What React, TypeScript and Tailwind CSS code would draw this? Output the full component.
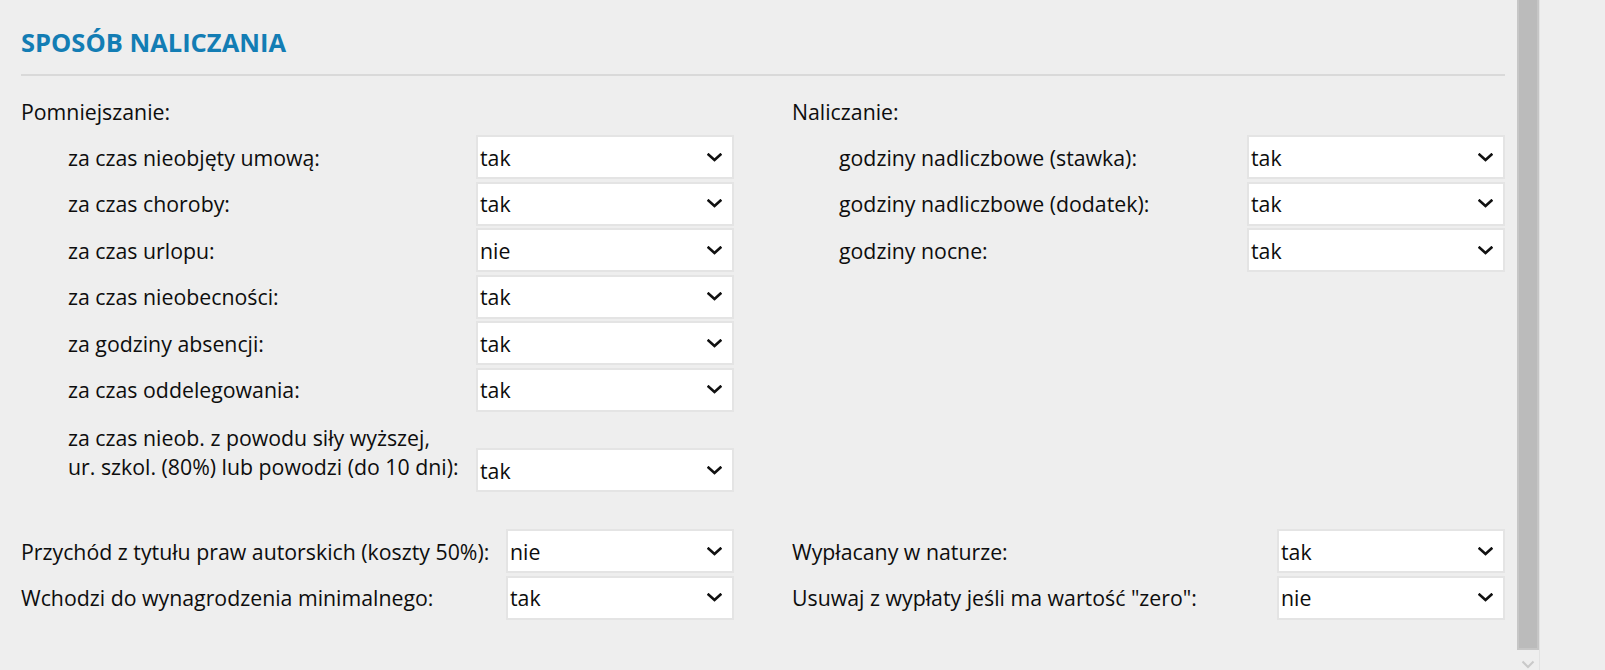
import clsx from 'clsx'

type SelectProps = {
  value: string
  className?: string
}

function Chevron() {
  return (
    <svg width="15" height="9" viewBox="0 0 15 9" fill="none" className="shrink-0">
      <polyline
        points="1.6,1.6 7.5,7 13.4,1.6"
        stroke="#111"
        strokeWidth="2.6"
        strokeLinecap="square"
        strokeLinejoin="miter"
      />
    </svg>
  )
}

function Select({ value, className }: SelectProps) {
  return (
    <div
      className={clsx(
        'flex h-[44px] shrink-0 items-center justify-between border-2 border-[#e4e4e4] bg-white pl-[2px] pr-[10px] leading-[29px]',
        className,
      )}
    >
      <span>{value}</span>
      <Chevron />
    </div>
  )
}

type RowProps = {
  label: string
  value: string
  indent?: boolean
  wide?: boolean
}

function Row({ label, value, indent, wide }: RowProps) {
  return (
    <div className="flex h-[44px] items-center">
      <div className={clsx('flex-1 whitespace-nowrap leading-[29px]', indent && 'pl-[47px]')}>
        {label}
      </div>
      <Select value={value} className={wide ? 'w-[258px]' : 'w-[228px]'} />
    </div>
  )
}

const pomniejszanie = [
  { label: 'za czas nieobjęty umową:', value: 'tak' },
  { label: 'za czas choroby:', value: 'tak' },
  { label: 'za czas urlopu:', value: 'nie' },
  { label: 'za czas nieobecności:', value: 'tak' },
  { label: 'za godziny absencji:', value: 'tak' },
  { label: 'za czas oddelegowania:', value: 'tak' },
]

const naliczanie = [
  { label: 'godziny nadliczbowe (stawka):', value: 'tak' },
  { label: 'godziny nadliczbowe (dodatek):', value: 'tak' },
  { label: 'godziny nocne:', value: 'tak' },
]

export default function App() {
  return (
    <div className="flex h-[670px] w-full overflow-hidden bg-[#eeeeee] font-['Open_Sans','Noto_Sans',sans-serif] text-[21.3px] text-[#0d0d0d]">
      <div className="w-[1517px] shrink-0 pl-[21px] pr-[12px]">
        <h2 className="mt-[24px] h-[36px] text-[25.5px] leading-[36px] font-bold text-[#137db4]">
          SPOSÓB NALICZANIA
        </h2>
        <div className="mt-[14px] h-[2px] bg-[#d9d9d9]" />

        <div className="grid grid-cols-[713px_713px] gap-x-[58px]">
          <div>
            <div className="mt-[21px] h-[29px] leading-[29px]">Pomniejszanie:</div>
            <div className="mt-[9px] flex flex-col gap-[2.5px]">
              {pomniejszanie.map(r => (
                <Row key={r.label} label={r.label} value={r.value} indent wide />
              ))}
              <div className="mt-[8.5px] flex items-start">
                <div className="flex-1 pl-[47px] leading-[29px] whitespace-nowrap">
                  za czas nieob. z powodu siły wyższej,
                  <br />
                  ur. szkol. (80%) lub powodzi (do 10 dni):
                </div>
                <Select value="tak" className="mt-[25.5px] w-[258px]" />
              </div>
            </div>
          </div>

          <div>
            <div className="mt-[21px] h-[29px] leading-[29px]">Naliczanie:</div>
            <div className="mt-[9px] flex flex-col gap-[2.5px]">
              {naliczanie.map(r => (
                <Row key={r.label} label={r.label} value={r.value} indent wide />
              ))}
            </div>
          </div>
        </div>

        <div className="mt-[37px] grid grid-cols-[713px_713px] gap-x-[58px]">
          <div className="flex flex-col gap-[2.5px]">
            <Row label="Przychód z tytułu praw autorskich (koszty 50%):" value="nie" />
            <Row label="Wchodzi do wynagrodzenia minimalnego:" value="tak" />
          </div>
          <div className="flex flex-col gap-[2.5px]">
            <Row label="Wypłacany w naturze:" value="tak" />
            <Row label={'Usuwaj z wypłaty jeśli ma wartość "zero":'} value="nie" />
          </div>
        </div>
      </div>

      {/* scrollbar */}
      <div className="flex w-[23px] shrink-0 flex-col border-r border-[#e2e2e2]">
        <div className="h-[650px] border-x-2 border-b-2 border-[#c6c6c6] bg-[#bbbbbb]" />
        <div className="flex flex-1 items-end justify-center pb-[1px]">
          <svg width="14" height="9" viewBox="0 0 14 9" fill="none">
            <polyline points="1.5,1.5 7,7 12.5,1.5" stroke="#c9c9c9" strokeWidth="2" />
          </svg>
        </div>
      </div>
      <div className="flex-1" />
    </div>
  )
}
